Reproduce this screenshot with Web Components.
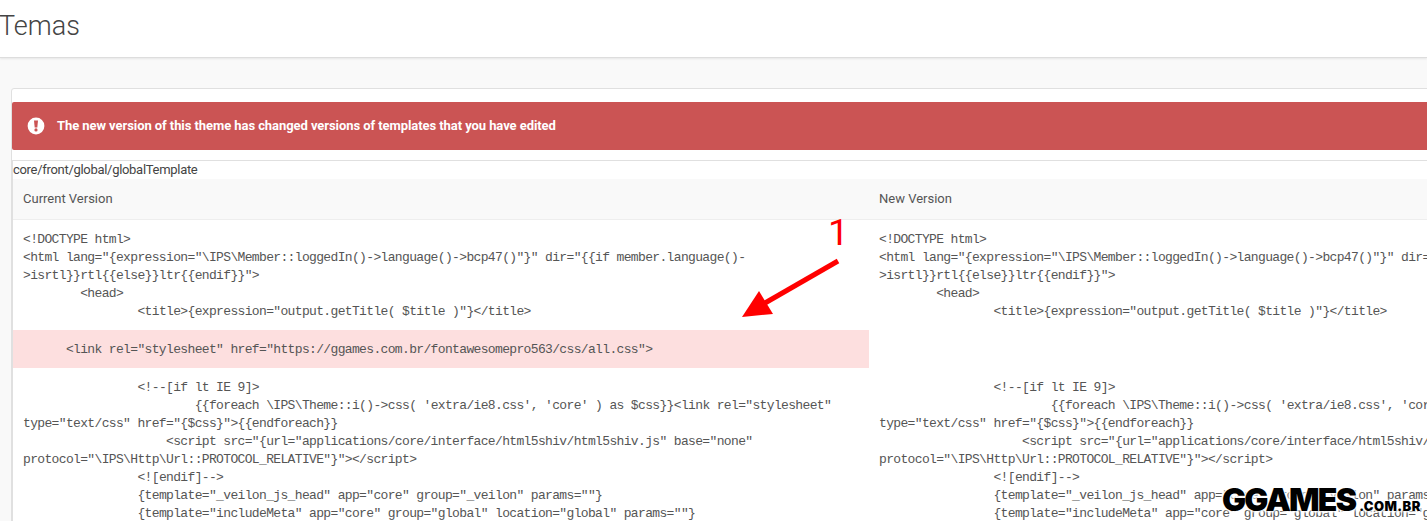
<!DOCTYPE html>
<html lang="en">
<head>
<meta charset="utf-8">
<title>Temas</title>
<style>
html, body { margin: 0; height: 100%; overflow: hidden; background: #f9f9f9; }
body { font-family: Roboto, "Liberation Sans", sans-serif; color: #555; }
</style>
</head>
<body>
<page-header>Temas</page-header>
<page-card>
  <alert-bar>The new version of this theme has changed versions of templates that you have edited</alert-bar>
  <diff-panel path="core/front/global/globalTemplate">
    <code-cell>&lt;!DOCTYPE html&gt;
&lt;html lang="{expression="\IPS\Member::loggedIn()-&gt;language()-&gt;bcp47()"}" dir="{{if member.language()-
&gt;isrtl}}rtl{{else}}ltr{{endif}}"&gt;
	&lt;head&gt;
		&lt;title&gt;{expression="output.getTitle( $title )"}&lt;/title&gt;</code-cell>
    <code-cell>&lt;!DOCTYPE html&gt;
&lt;html lang="{expression="\IPS\Member::loggedIn()-&gt;language()-&gt;bcp47()"}" dir="{{if member.language()-
&gt;isrtl}}rtl{{else}}ltr{{endif}}"&gt;
	&lt;head&gt;
		&lt;title&gt;{expression="output.getTitle( $title )"}&lt;/title&gt;</code-cell>
    <code-cell changed>      &lt;link rel="stylesheet" href="https://ggames.com.br/fontawesomepro563/css/all.css"&gt;</code-cell>
    <code-cell></code-cell>
    <code-cell>		&lt;!--[if lt IE 9]&gt;
			{{foreach \IPS\Theme::i()-&gt;css( 'extra/ie8.css', 'core' ) as $css}}&lt;link rel="stylesheet"
type="text/css" href="{$css}"&gt;{{endforeach}}
		    &lt;script src="{url="applications/core/interface/html5shiv/html5shiv.js" base="none"
protocol="\IPS\Http\Url::PROTOCOL_RELATIVE"}"&gt;&lt;/script&gt;
		&lt;![endif]--&gt;
		{template="_veilon_js_head" app="core" group="_veilon" params=""}
		{template="includeMeta" app="core" group="global" location="global" params=""}</code-cell>
    <code-cell>		&lt;!--[if lt IE 9]&gt;
			{{foreach \IPS\Theme::i()-&gt;css( 'extra/ie8.css', 'core' ) as $css}}&lt;link rel="stylesheet"
type="text/css" href="{$css}"&gt;{{endforeach}}
		    &lt;script src="{url="applications/core/interface/html5shiv/html5shiv.js" base="none"
protocol="\IPS\Http\Url::PROTOCOL_RELATIVE"}"&gt;&lt;/script&gt;
		&lt;![endif]--&gt;
		{template="_veilon_js_head" app="core" group="_veilon" params=""}
		{template="includeMeta" app="core" group="global" location="global" params=""}</code-cell>
  </diff-panel>
</page-card>
<note-arrow></note-arrow>
<site-mark></site-mark>

<script>
class PageHeader extends HTMLElement {
  connectedCallback() {
    this.attachShadow({ mode: 'open' }).innerHTML = `
<style>
:host {
  display: block;
  box-sizing: border-box;
  height: 58px;
  background: #fff;
  border-bottom: 1px solid #ddd;
  box-shadow: 0 1px 2px rgba(0, 0, 0, .08);
  color: #444;
  font: 300 27px/52px Roboto, sans-serif;
  text-indent: -1px;
}
</style>
<slot></slot>`;
  }
}

class PageCard extends HTMLElement {
  connectedCallback() {
    this.attachShadow({ mode: 'open' }).innerHTML = `
<style>
:host {
  display: block;
  box-sizing: border-box;
  width: 1800px;
  height: 500px;
  margin: 30px 0 0 11px;
  padding-top: 13px;
  background: #fff;
  border: 1px solid #e0e0e0;
  border-radius: 3px;
}
</style>
<slot></slot>`;
  }
}

class AlertBar extends HTMLElement {
  connectedCallback() {
    this.attachShadow({ mode: 'open' }).innerHTML = `
<style>
:host {
  display: flex;
  align-items: center;
  gap: 12px;
  height: 48px;
  padding-left: 15px;
  background: #cb5454;
  border-radius: 2px 0 0 2px;
  color: #fff;
  font: 700 13px/16px Roboto, sans-serif;
  letter-spacing: -.07px;
}
svg { display: block; }
</style>
<svg width="18" height="18" viewBox="0 0 18 18">
  <circle cx="9" cy="9" r="8.4" fill="#fff"/>
  <path d="M7 3.4 H11 L10.3 10.4 H7.7 Z" fill="#cb5454"/>
  <circle cx="9" cy="12.9" r="1.6" fill="#cb5454"/>
</svg>
<slot></slot>`;
  }
}

class DiffPanel extends HTMLElement {
  connectedCallback() {
    this.attachShadow({ mode: 'open' }).innerHTML = `
<style>
:host {
  display: block;
  margin-top: 10px;
  border-top: 1px solid #e0e0e0;
  border-left: 1px solid #e0e0e0;
}
.path {
  height: 18px;
  color: #444;
  font: 400 13px/18px Roboto, sans-serif;
  letter-spacing: -.3px;
}
.table {
  display: grid;
  grid-template-columns: 856px 856px;
}
.head {
  box-sizing: border-box;
  height: 41px;
  padding-left: 10px;
  background: #f9f9f9;
  border-bottom: 1px solid #eee;
  font: 400 13px/40px Roboto, sans-serif;
}
</style>
<div class="path"></div>
<div class="table">
  <div class="head">Current Version</div>
  <div class="head">New Version</div>
  <slot></slot>
</div>`;
    this.shadowRoot.querySelector('.path').textContent = this.getAttribute('path');
  }
}

class CodeCell extends HTMLElement {
  connectedCallback() {
    this.attachShadow({ mode: 'open' }).innerHTML = `
<style>
:host {
  display: block;
  padding: 11px 0 9px 10px;
  color: #555;
  font: 13px/18px "Liberation Mono", monospace;
  letter-spacing: -.65px;
  tab-size: 8;
}
slot { white-space: pre; }
:host([changed]) { background: #fddfdf; }
</style>
<slot></slot>`;
  }
}

class NoteArrow extends HTMLElement {
  connectedCallback() {
    this.attachShadow({ mode: 'open' }).innerHTML = `
<style>
:host {
  position: absolute;
  left: 735px;
  top: 210px;
  width: 115px;
  height: 115px;
}
span {
  position: absolute;
  left: 93px;
  top: 1px;
  color: #f00;
  font: 400 37px/44px Roboto, sans-serif;
}
svg { position: absolute; left: 0; top: 0; }
</style>
<span>1</span>
<svg width="115" height="115" viewBox="735 210 115 115">
  <path d="M838 261 L765 303" stroke="#f00" stroke-width="5" fill="none"/>
  <path d="M742 317 L759 291 L773 314 Z" fill="#f00"/>
</svg>`;
  }
}

class SiteMark extends HTMLElement {
  connectedCallback() {
    this.attachShadow({ mode: 'open' }).innerHTML = `
<style>
:host {
  position: absolute;
  left: 1222px;
  top: 482px;
  display: flex;
  align-items: baseline;
  color: #000;
  font-family: Inter, sans-serif;
  font-weight: 900;
  text-shadow: 0 0 2px #fff, 0 0 2px #fff, 0 0 3px #fff, 1px 1px 3px #fff, -1px -1px 3px #fff;
}
b { font-size: 32px; line-height: 36px; font-weight: 900; letter-spacing: -1.8px; }
i { font-size: 13px; font-style: normal; margin-left: 4px; letter-spacing: .4px; }
</style>
<b>GGAMES</b><i>.COM.BR</i>`;
  }
}

customElements.define('page-header', PageHeader);
customElements.define('page-card', PageCard);
customElements.define('alert-bar', AlertBar);
customElements.define('diff-panel', DiffPanel);
customElements.define('code-cell', CodeCell);
customElements.define('note-arrow', NoteArrow);
customElements.define('site-mark', SiteMark);
</script>
</body>
</html>
